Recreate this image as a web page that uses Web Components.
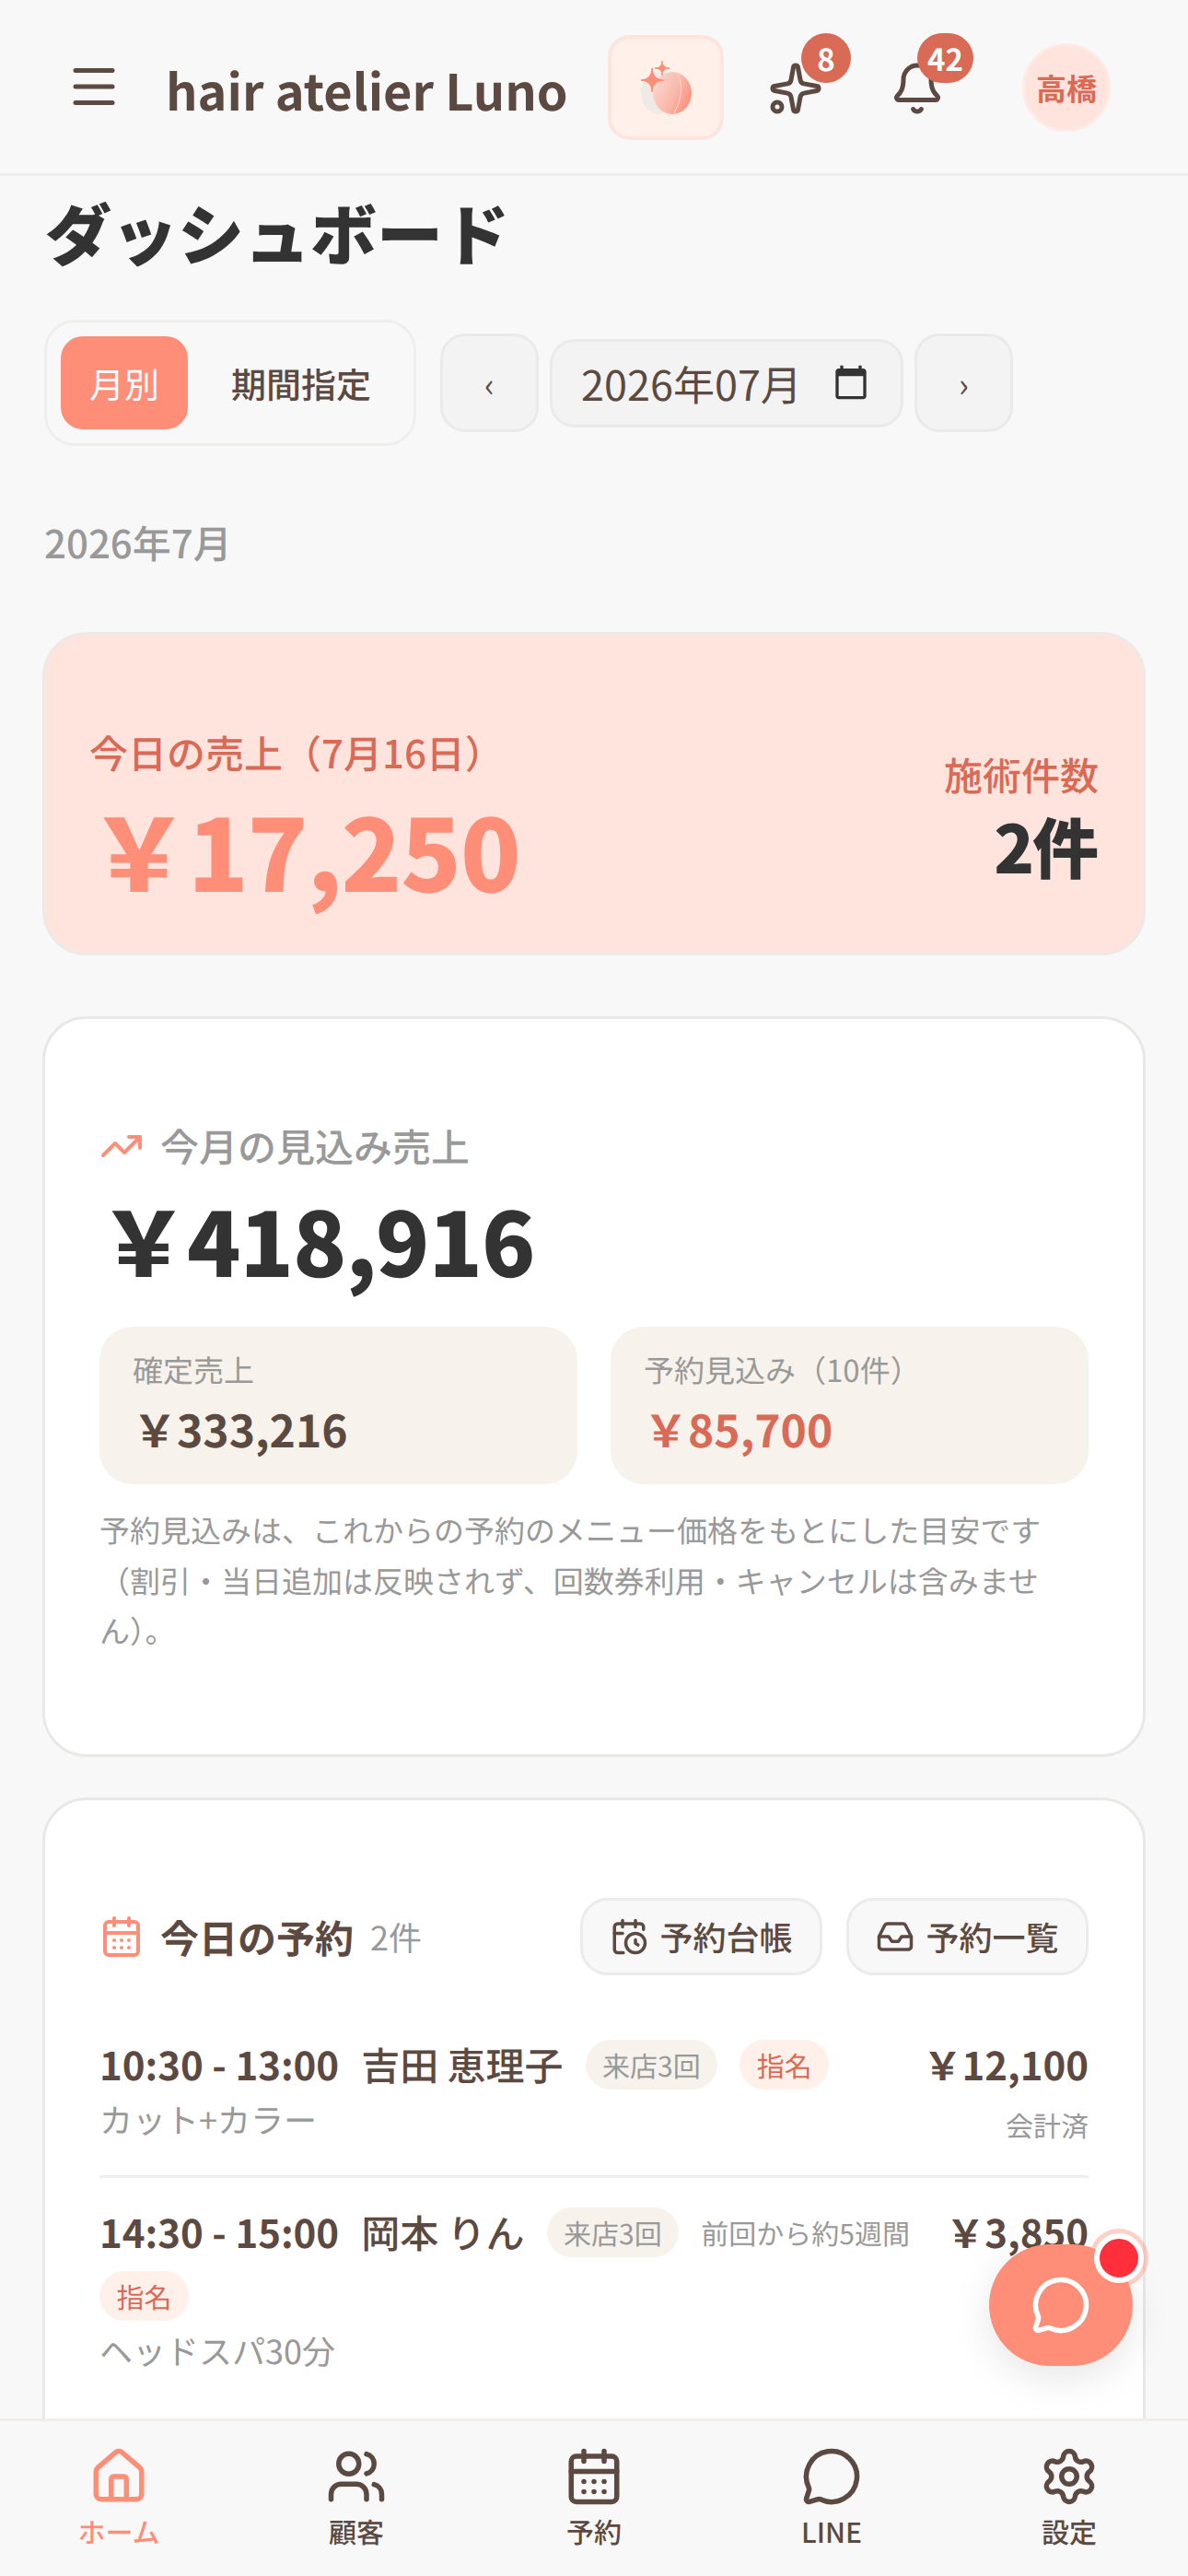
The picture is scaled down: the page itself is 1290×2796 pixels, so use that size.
<!DOCTYPE html>
<html lang="ja">
<head>
<meta charset="utf-8">
<title>hair atelier Luno</title>
<style>
  html, body { margin: 0; height: 100%; }
  body {
    background: #f8f8f8;
    color: #5c4a42;
    font-family: "Noto Sans CJK JP", "Noto Sans", sans-serif;
    text-rendering: geometricPrecision;
    overflow: hidden;
  }
  app-shell { height: 2796px; }
</style>
</head>
<body>
<app-shell>
  <app-header slot="top"></app-header>
  <h-title>ダッシュボード</h-title>
  <period-bar></period-bar>
  <month-label>2026年7月</month-label>
  <today-card></today-card>
  <forecast-card></forecast-card>
  <reserve-card>
    <reserve-row time="10:30 - 13:00" name="吉田 恵理子" visits="来店3回" nominated price="￥12,100" menu="カット+カラー" status="会計済"></reserve-row>
    <reserve-row last time="14:30 - 15:00" name="岡本 りん" visits="来店3回" since="前回から約5週間" nominated price="￥3,850" menu="ヘッドスパ30分"></reserve-row>
  </reserve-card>
  <bottom-nav slot="bottom"></bottom-nav>
  <chat-fab slot="over"></chat-fab>
</app-shell>

<script>
const ICONS = {
  menu: '<path d="M4 5h16"/><path d="M4 12h16"/><path d="M4 19h16"/>',
  sparkles: '<path d="M11.017 2.814a1 1 0 0 1 1.966 0l1.051 5.558a2 2 0 0 0 1.594 1.594l5.558 1.051a1 1 0 0 1 0 1.966l-5.558 1.051a2 2 0 0 0-1.594 1.594l-1.051 5.558a1 1 0 0 1-1.966 0l-1.051-5.558a2 2 0 0 0-1.594-1.594l-5.558-1.051a1 1 0 0 1 0-1.966l5.558-1.051a2 2 0 0 0 1.594-1.594z"/><path d="M20 2v4"/><path d="M22 4h-4"/><circle cx="4" cy="20" r="2"/>',
  bell: '<path d="M10.268 21a2 2 0 0 0 3.464 0"/><path d="M3.262 15.326A1 1 0 0 0 4 17h16a1 1 0 0 0 .74-1.673C19.41 13.956 18 12.499 18 8A6 6 0 0 0 6 8c0 4.499-1.411 5.956-2.738 7.326"/>',
  trending: '<path d="M16 7h6v6"/><path d="m22 7-8.5 8.5-5-5L2 17"/>',
  calendar: '<path d="M8 2v4"/><path d="M16 2v4"/><rect width="18" height="18" x="3" y="4" rx="2"/><path d="M3 10h18"/><path d="M8 14h.01"/><path d="M12 14h.01"/><path d="M16 14h.01"/><path d="M8 18h.01"/><path d="M12 18h.01"/><path d="M16 18h.01"/>',
  clock: '<path d="M16 14v2.2l1.6 1"/><path d="M16 2v4"/><path d="M21 7.5V6a2 2 0 0 0-2-2H5a2 2 0 0 0-2 2v14a2 2 0 0 0 2 2h3.5"/><path d="M3 10h5"/><path d="M8 2v4"/><circle cx="16" cy="16" r="6"/>',
  inbox: '<polyline points="22 12 16 12 14 15 10 15 8 12 2 12"/><path d="M5.45 5.11 2 12v6a2 2 0 0 0 2 2h16a2 2 0 0 0 2-2v-6l-3.45-6.89A2 2 0 0 0 16.76 4H7.24a2 2 0 0 0-1.79 1.11z"/>',
  home: '<path d="M15 21v-8a1 1 0 0 0-1-1h-4a1 1 0 0 0-1 1v8"/><path d="M3 10a2 2 0 0 1 .709-1.528l7-5.999a2 2 0 0 1 2.582 0l7 5.999A2 2 0 0 1 21 10v9a2 2 0 0 1-2 2H5a2 2 0 0 1-2-2z"/>',
  users: '<path d="M16 21v-2a4 4 0 0 0-4-4H6a4 4 0 0 0-4 4v2"/><path d="M16 3.128a4 4 0 0 1 0 7.744"/><path d="M22 21v-2a4 4 0 0 0-3-3.87"/><circle cx="9" cy="7" r="4"/>',
  chat: '<path d="M2.992 16.342a2 2 0 0 1 .094 1.167l-1.065 3.29a1 1 0 0 0 1.236 1.168l3.413-.998a2 2 0 0 1 1.099.092 10 10 0 1 0-4.777-4.719"/>',
  settings: '<path d="M9.671 4.136a2.34 2.34 0 0 1 4.659 0 2.34 2.34 0 0 0 3.319 1.915 2.34 2.34 0 0 1 2.33 4.033 2.34 2.34 0 0 0 0 3.831 2.34 2.34 0 0 1-2.33 4.033 2.34 2.34 0 0 0-3.319 1.915 2.34 2.34 0 0 1-4.659 0 2.34 2.34 0 0 0-3.32-1.915 2.34 2.34 0 0 1-2.33-4.033 2.34 2.34 0 0 0 0-3.831A2.34 2.34 0 0 1 6.35 6.051a2.34 2.34 0 0 0 3.32-1.915"/><circle cx="12" cy="12" r="3"/>'
};

function icon(name, size) {
  return `<svg xmlns="http://www.w3.org/2000/svg" width="${size}" height="${size}" viewBox="0 0 24 24" fill="none" stroke="currentColor" stroke-width="2" stroke-linecap="round" stroke-linejoin="round" style="display:block;flex:none">${ICONS[name]}</svg>`;
}

class Base extends HTMLElement {
  constructor() {
    super();
    this.shadowDOM = this.attachShadow({ mode: 'open' });
  }

  connectedCallback() {
    this.render();
  }
}

class AppShell extends Base {
  render() {
    this.shadowDOM.innerHTML = `
    <style>
      :host { display: flex; flex-direction: column; position: relative; overflow: hidden; }
      main { flex: 1; min-height: 0; overflow: hidden; padding: 6px 46px 0; display: flex; flex-direction: column; }
    </style>
    <slot name="top"></slot>
    <main><slot></slot></main>
    <slot name="bottom"></slot>
    <slot name="over"></slot>
    `;
  }
}

class AppHeader extends Base {
  render() {
    this.shadowDOM.innerHTML = `
    <style>
      :host { display: flex; align-items: center; height: 188px; flex: none; border-bottom: 3px solid #f0edea; padding-left: 72px; box-sizing: content-box; position: relative; }
      .name { margin-left: 48px; width: 480px; font-size: 54px; font-weight: 700; color: #5c4a42; white-space: nowrap; position: relative; top: 2px; }
      .logo { width: 126px; height: 114px; box-sizing: border-box; border: 4px solid #ffe4de; border-radius: 24px; background: #fff0ea; display: flex; align-items: center; justify-content: center; flex: none; margin-top: 2px; }
      .bell { position: relative; flex: none; color: #5c4a42; margin-top: 4px; }
      .badge { position: absolute; top: -30px; height: 54px; min-width: 54px; box-sizing: border-box; padding: 0 11px; border-radius: 27px; background: #d96b56; color: #fff; font-size: 33px; font-weight: 700; display: flex; align-items: center; justify-content: center; }
      .avatar { width: 96px; height: 96px; box-sizing: border-box; border: 3px solid #ffeae5; border-radius: 50%; background: #ffe4de; color: #d96b56; font-size: 33px; font-weight: 700; display: flex; align-items: center; justify-content: center; flex: none; margin-left: 84px; margin-top: 2px; }
    </style>
    ${icon('menu', 60)}
    <div class="name">hair atelier Luno</div>
    <div class="logo">
      <svg width="55" height="58" viewBox="697 65 55 58">
        <defs>
          <linearGradient id="pe" x1="0" y1="0" x2="1" y2="0.5">
            <stop offset="0" stop-color="#fbdcd3"/><stop offset="0.65" stop-color="#f9b8aa"/><stop offset="1" stop-color="#fc9682"/>
          </linearGradient>
        </defs>
        <ellipse cx="716" cy="100" rx="19" ry="23" fill="#efeae6"/>
        <ellipse cx="731" cy="100" rx="21" ry="23" fill="url(#pe)"/>
        <path d="M737 78Q746 98 733 122" fill="none" stroke="#fcd5cb" stroke-width="1"/>
        <path d="M709 73Q709 86 722 86Q709 86 709 99Q709 86 697 86Q709 86 709 73Z" fill="#ff8e78" stroke="#ff8e78" stroke-width="1.5"/>
        <path d="M720 65Q720 73 728 73Q720 73 720 81Q720 73 712 73Q720 73 720 65Z" fill="#ff8e78" stroke="#ff8e78"/>
      </svg>
    </div>
    <div class="bell" style="margin-left:48px">${icon('sparkles', 60)}<span class="badge" style="left:36px">8</span></div>
    <div class="bell" style="margin-left:72px">${icon('bell', 60)}<span class="badge" style="left:30px">42</span></div>
    <div class="avatar">高橋</div>
    `;
  }
}

class HTitle extends Base {
  render() {
    this.shadowDOM.innerHTML = `
    <style>:host { display: block; margin-left: 3px; font-size: 72px; line-height: 108px; font-weight: 900; color: #333; flex: none; }</style>
    <slot></slot>
    `;
  }
}

class PeriodBar extends Base {
  render() {
    this.shadowDOM.innerHTML = `
    <style>
      :host { display: flex; align-items: center; gap: 26px; margin: 42px 0 0 2px; flex: none; }
      .tabs { display: flex; gap: 0; box-sizing: border-box; width: 404px; height: 137px; padding: 15px; border: 3px solid #eeeeec; border-radius: 33px; }
      .tab { height: 101px; display: flex; align-items: center; justify-content: center; font-size: 38px; border-radius: 24px; color: #5c4a42; font-weight: 500; }
      .on { width: 138px; background: #ff8e78; color: #fff; font-weight: 400; }
      .off { flex: 1; padding-left: 16px; }
      .nav { display: flex; align-items: center; gap: 12px; }
      .step, .date { box-sizing: border-box; background: #f3f3f3; border: 3px solid #eaeaea; color: #5c4a42; display: flex; align-items: center; }
      .step { width: 107px; height: 107px; border-radius: 27px; justify-content: center; font-size: 36px; }
      .date { width: 384px; height: 96px; border-radius: 27px; font-size: 45px; padding-left: 31px; }
      .date svg { margin-left: 33px; margin-bottom: 2px; }
    </style>
    <div class="tabs">
      <div class="tab on">月別</div>
      <div class="tab off">期間指定</div>
    </div>
    <div class="nav">
      <div class="step">‹</div>
      <div class="date">2026年07月
        <svg width="40" height="40" viewBox="0 0 24 24" fill="#333"><path d="M20 3h-1V1h-2v2H7V1H5v2H4c-1.1 0-2 .9-2 2v16c0 1.1.9 2 2 2h16c1.1 0 2-.9 2-2V5c0-1.1-.9-2-2-2zm0 18H4V8h16v13z"/></svg>
      </div>
      <div class="step">›</div>
    </div>
    `;
  }
}

class MonthLabel extends Base {
  render() {
    this.shadowDOM.innerHTML = `
    <style>:host { display: block; margin: 73px 0 66px 2px; font-size: 42px; font-weight: 500; line-height: 63px; color: #999; flex: none; }</style>
    <slot></slot>
    `;
  }
}

class TodayCard extends Base {
  render() {
    this.shadowDOM.innerHTML = `
    <style>
      :host { display: flex; justify-content: space-between; align-items: center; box-sizing: border-box; height: 351px; padding: 44px 48px 0; background: #ffe4de; border: 3px solid #efe9e6; border-radius: 48px; flex: none; }
      .label { font-size: 42px; font-weight: 500; line-height: 63px; color: #d96b56; }
      .amount { font-size: 108px; line-height: 120px; font-weight: 900; letter-spacing: -1px; color: #ff8e78; margin-top: 14px; }
      .right { text-align: right; margin-top: 4px; }
      .count { font-size: 72px; line-height: 90px; font-weight: 900; letter-spacing: -2px; padding-right: 2px; color: #333; }
    </style>
    <div>
      <div class="label">今日の売上（7月16日）</div>
      <div class="amount">￥17,250</div>
    </div>
    <div class="right">
      <div class="label">施術件数</div>
      <div class="count">2件</div>
    </div>
    `;
  }
}

class ForecastCard extends Base {
  render() {
    this.shadowDOM.innerHTML = `
    <style>
      :host { display: block; box-sizing: border-box; height: 804px; padding: 106px 59px 0; margin-top: 66px; background: #fff; border: 3px solid #e8e8e6; border-radius: 48px; flex: none; }
      .head { display: flex; align-items: center; gap: 18px; font-size: 42px; font-weight: 500; line-height: 63px; color: #999; }
      .head svg { color: #ff8e78; }
      .total { font-size: 96px; line-height: 130px; font-weight: 900; letter-spacing: -1px; color: #333; margin-top: 5px; }
      .cols { display: grid; grid-template-columns: 1fr 1fr; gap: 36px; margin-top: 30px; }
      .box { height: 171px; box-sizing: border-box; padding: 21px 36px 0; background: #f7f2ec; border-radius: 36px; }
      .box .k { font-size: 33px; line-height: 50px; color: #999; }
      .box .v { font-size: 48px; line-height: 72px; font-weight: 700; color: #5c4a42; margin-top: 3px; }
      .box .v.acc { color: #d96b56; }
      .note { margin-top: 22px; font-size: 33px; line-height: 54.5px; color: #999; }
    </style>
    <div class="head">${icon('trending', 48)}今月の見込み売上</div>
    <div class="total">￥418,916</div>
    <div class="cols">
      <div class="box"><div class="k">確定売上</div><div class="v">￥333,216</div></div>
      <div class="box"><div class="k">予約見込み（10件）</div><div class="v acc">￥85,700</div></div>
    </div>
    <div class="note">予約見込みは、これからの予約のメニュー価格をもとにした目安です（割引・当日追加は反映されず、回数券利用・キャンセルは含みません）。</div>
    `;
  }
}

class ReserveCard extends Base {
  render() {
    this.shadowDOM.innerHTML = `
    <style>
      :host { display: block; box-sizing: border-box; height: 900px; padding: 106px 59px 0; margin-top: 44px; background: #fff; border: 3px solid #e8e8e6; border-radius: 48px; flex: none; }
      .head { display: flex; align-items: center; height: 84px; margin-bottom: 70px; }
      .head > svg { color: #ff8e78; }
      .title { font-size: 42px; font-weight: 700; color: #5c4a42; margin-left: 18px; }
      .count { font-size: 36px; color: #999; margin-left: 18px; }
      .btns { margin-left: auto; display: flex; gap: 26px; }
      .btn { box-sizing: border-box; width: 263px; height: 84px; display: flex; align-items: center; justify-content: center; gap: 12px; font-size: 36px; font-weight: 500; color: #5c4a42; background: #f8f8f8; border: 3px solid #ebebeb; border-radius: 30px; }
    </style>
    <div class="head">
      ${icon('calendar', 48)}
      <span class="title">今日の予約</span>
      <span class="count">2件</span>
      <div class="btns">
        <div class="btn">${icon('clock', 42)}予約台帳</div>
        <div class="btn">${icon('inbox', 42)}予約一覧</div>
      </div>
    </div>
    <slot></slot>
    `;
  }
}

class ReserveRow extends Base {
  render() {
    const a = (n) => this.getAttribute(n);
    const since = a('since') ? `<span class="since">${a('since')}</span>` : '';
    const nom = this.hasAttribute('nominated') ? '<span class="pill nom">指名</span>' : '';
    const status = a('status') ? `<div class="status">${a('status')}</div>` : '';
    this.shadowDOM.innerHTML = `
    <style>
      :host { display: flex; justify-content: space-between; gap: 24px; padding-bottom: 32px; margin-bottom: 32px; border-bottom: 3px solid ${this.hasAttribute('last') ? 'transparent' : '#f0edea'}; }
      .left { flex: 1; min-width: 0; }
      .line { display: flex; flex-wrap: wrap; align-items: center; gap: 15px 24px; }
      .time { font-size: 42px; line-height: 54px; font-weight: 700; color: #5c4a42; white-space: nowrap; }
      .name { font-size: 42px; line-height: 54px; font-weight: 500; color: #5c4a42; white-space: nowrap; }
      .pill { height: 54px; box-sizing: border-box; padding: 0 18.5px; border-radius: 27px; font-size: 30px; display: inline-flex; align-items: center; white-space: nowrap; }
      .visit { background: #f7f2ec; color: #999; }
      .nom { background: #fff0ea; color: #d96b56; }
      .since { font-size: 30px; color: #999; white-space: nowrap; }
      .menu { font-size: 36px; line-height: 54px; color: #999; margin-top: 5px; }
      .right { text-align: right; flex: none; }
      .price { font-size: 42px; line-height: 54px; font-weight: 700; color: #5c4a42; white-space: nowrap; }
      .status { font-size: 30px; line-height: 45px; color: #999; margin-top: 16px; }
    </style>
    <div class="left">
      <div class="line">
        <span class="time">${a('time')}</span>
        <span class="name">${a('name')}</span>
        <span class="pill visit">${a('visits')}</span>
        ${since}
        ${nom}
      </div>
      <div class="menu">${a('menu')}</div>
    </div>
    <div class="right">
      <div class="price">${a('price')}</div>
      ${status}
    </div>
    `;
  }
}

class BottomNav extends Base {
  render() {
    const items = [['home', 'ホーム', true], ['users', '顧客'], ['calendar', '予約'], ['chat', 'LINE'], ['settings', '設定']];
    this.shadowDOM.innerHTML = `
    <style>
      :host { display: grid; grid-template-columns: repeat(5, 1fr); flex: none; height: 168px; box-sizing: content-box; border-top: 3px solid #f0edea; background: #f8f8f8; position: relative; z-index: 1; }
      .item { display: flex; flex-direction: column; align-items: center; padding-top: 27px; color: #5c4a42; font-size: 30px; font-weight: 500; line-height: 45px; }
      .item span { margin-top: 4px; }
      .on { color: #ff8e78; }
    </style>
    ${items.map((i) => `<div class="item ${i[2] ? 'on' : ''}">${icon(i[0], 66)}<span>${i[1]}</span></div>`).join('')}
    `;
  }
}

class ChatFab extends Base {
  render() {
    this.shadowDOM.innerHTML = `
    <style>
      :host { position: absolute; left: 1074px; top: 2436px; width: 156px; height: 132px; border-radius: 66px; background: #ff8e78; color: #fff; display: flex; align-items: center; justify-content: center; box-shadow: 0 12px 45px rgba(0,0,0,.1); z-index: 2; }
      .dot { position: absolute; left: 114px; top: -12px; width: 42px; height: 42px; border-radius: 50%; background: #ff2f3c; border: 6px solid #fff; box-shadow: 0 0 0 5px rgba(255,142,120,.4); }
    </style>
    ${icon('chat', 66)}
    <span class="dot"></span>
    `;
  }
}

customElements.define('app-shell', AppShell);
customElements.define('app-header', AppHeader);
customElements.define('h-title', HTitle);
customElements.define('period-bar', PeriodBar);
customElements.define('month-label', MonthLabel);
customElements.define('today-card', TodayCard);
customElements.define('forecast-card', ForecastCard);
customElements.define('reserve-card', ReserveCard);
customElements.define('reserve-row', ReserveRow);
customElements.define('bottom-nav', BottomNav);
customElements.define('chat-fab', ChatFab);
</script>
</body>
</html>
